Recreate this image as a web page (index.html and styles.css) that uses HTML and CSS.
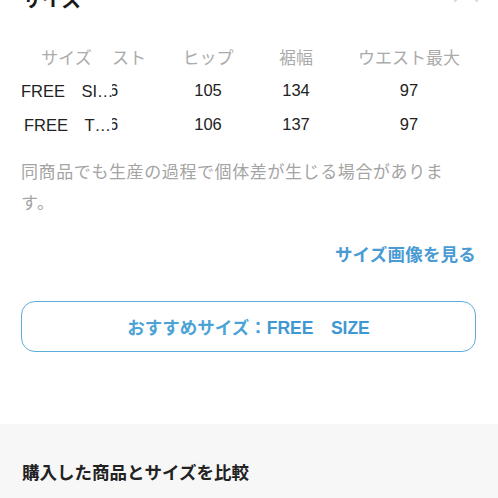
FILE: index.html
```html
<!DOCTYPE html>
<html lang="ja">
<head>
<meta charset="utf-8">
<link rel="stylesheet" href="styles.css">
</head>
<body>
<div class="sheet">
  <div class="head">
    <h1 class="title">サイズ</h1>
    <svg class="close" width="26" height="26" viewBox="0 0 26 26"><path d="M2 2 L24 24 M24 2 L2 24" stroke="#d6d6d6" stroke-width="2" stroke-linecap="round" fill="none"/></svg>
  </div>
  <div class="table">
    <div class="row hrow">
      <div class="c c1">サイズ</div>
      <div class="c c2">スト</div>
      <div class="c c3">ヒップ</div>
      <div class="c c4">裾幅</div>
      <div class="c c5">ウエスト最大</div>
    </div>
    <div class="row">
      <div class="c c1">FREE　SI…</div>
      <div class="c c2"><span class="clip">6</span></div>
      <div class="c c3">105</div>
      <div class="c c4">134</div>
      <div class="c c5">97</div>
    </div>
    <div class="row">
      <div class="c c1 shift">FREE　T…</div>
      <div class="c c2"><span class="clip">6</span></div>
      <div class="c c3">106</div>
      <div class="c c4">137</div>
      <div class="c c5">97</div>
    </div>
  </div>
  <p class="note">同商品でも生産の過程で個体差が生じる場合がありま<br>す。</p>
  <div class="linkrow"><a class="link">サイズ画像を見る</a></div>
  <div class="rec">おすすめサイズ：<b>FREE　SIZE</b></div>
</div>
<div class="compare">
  <h2 class="ctitle">購入した商品とサイズを比較</h2>
</div>
</body>
</html>
```
FILE: styles.css
```css
* { box-sizing: border-box; }
html, body { margin: 0; padding: 0; background: #fff; overflow: hidden; height: 498px; }
body { font-family: "Liberation Sans", "Noto Sans CJK JP", sans-serif; color: #222; }
.sheet { padding: 0 22px 0 21px; margin-top: -15px; }
.head { display: flex; justify-content: space-between; align-items: flex-start; height: 30px; }
.title { margin: 0; font-size: 20px; line-height: 30px; font-weight: bold; color: #1a1a1a; padding-left: 1px; }
.close { margin-top: -8px; margin-right: -3px; }
.table { margin-top: 24px; margin-left: -1px; }
.row { display: grid; grid-template-columns: 92px 48px 96px 80px 146px; height: 34px; align-items: center; font-size: 16.5px; color: #222; }
.hrow { color: #ababab; font-size: 17px; }
.c { text-align: center; white-space: nowrap; overflow: hidden; }
.c2 { text-align: left; }
.c1 { text-align: left; padding-left: 1px; }
.hrow .c1 { text-align: center; }
.shift { padding-left: 4px; }
.clip { display: inline-block; width: 6px; overflow: hidden; text-indent: -3px; vertical-align: bottom; }
.note { margin: 16px 0 0; font-size: 17px; line-height: 31px; letter-spacing: 0.6px; color: #a4a4a4; }
.linkrow { display: flex; justify-content: flex-end; margin-top: 23px; }
.link { font-size: 17.5px; line-height: 26px; font-weight: bold; color: #4a9ad4; letter-spacing: 0.2px; }
.rec { margin-top: 33px; height: 51px; border: 1.5px solid #5eacd9; border-radius: 14px; display: flex; align-items: center; justify-content: center; font-size: 17.5px; font-weight: bold; color: #4ca3d6; }
.rec b { font-weight: bold; color: #3f98d3; }
.compare { margin-top: 72px; background: #f7f7f7; height: 200px; padding: 36px 22px 0; }
.ctitle { margin: 0; font-size: 17.5px; line-height: 26px; font-weight: bold; color: #222; }
```
